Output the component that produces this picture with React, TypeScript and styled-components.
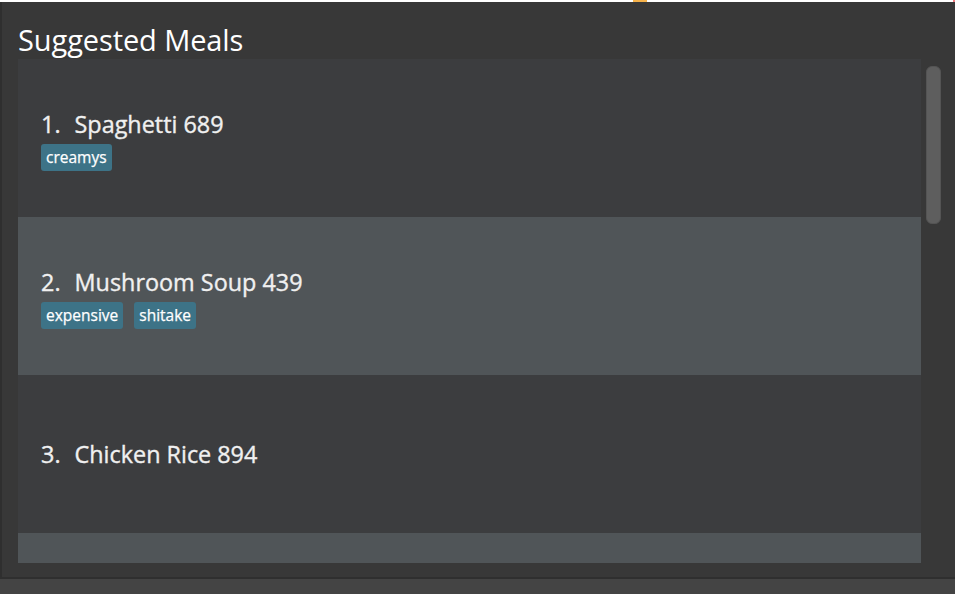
import React, { FC } from "react";
import styled, { createGlobalStyle } from "styled-components";

const GlobalStyle = createGlobalStyle`
  html, body {
    margin: 0;
    padding: 0;
    background: #383838;
    overflow: hidden;
  }
  body {
    font-family: "Open Sans", "Noto Sans", sans-serif;
  }
`;

const Window = styled.div`
  width: 955px;
  height: 594px;
  display: flex;
  flex-direction: column;
  background: #383838;
`;

const TopStrip = styled.div`
  height: 2px;
  display: flex;
  background: #ffffff;
`;

const StripMark = styled.span<{ $left: number; $width: number; $color: string }>`
  margin-left: ${(p) => p.$left}px;
  width: ${(p) => p.$width}px;
  background: ${(p) => p.$color};
`;

const Body = styled.div`
  flex: 1;
  display: flex;
  min-height: 0;
`;

const LeftEdge = styled.div`
  width: 2px;
  background: #2f2f2f;
`;

const Content = styled.section`
  flex: 1;
  display: flex;
  flex-direction: column;
  padding-left: 16px;
`;

const Title = styled.h1`
  margin: 0;
  height: 57px;
  box-sizing: border-box;
  padding-top: 18px;
  font-size: 29px;
  line-height: 40px;
  font-weight: normal;
  color: #ffffff;
  letter-spacing: -0.1px;
`;

const ListArea = styled.div`
  display: flex;
  height: 504px;
`;

const Panel = styled.ul`
  margin: 0;
  padding: 0;
  list-style: none;
  width: 903px;
  overflow: hidden;
  display: flex;
  flex-direction: column;
`;

const Row = styled.li<{ $odd: boolean; $tagged: boolean }>`
  flex: 0 0 158px;
  box-sizing: border-box;
  padding: ${(p) => (p.$tagged ? "3px" : "0")} 23px 0 23px;
  display: flex;
  flex-direction: column;
  justify-content: center;
  gap: 5px;
  background: ${(p) => (p.$odd ? "#3c3d3f" : "#505558")};
`;

const Heading = styled.div`
  display: flex;
  align-items: baseline;
  color: #f0f0f0;
  font-size: 23.4px;
  line-height: 30px;
  -webkit-text-stroke: 0.35px #f0f0f0;
`;

const Index = styled.span`
  margin-right: 14px;
`;

const Name = styled.span`
  margin-right: 6px;
`;

const Calories = styled.span``;

const Tags = styled.div`
  display: flex;
  gap: 11px;
`;

const Tag = styled.span`
  background: #3d7387;
  color: #ffffff;
  font-size: 15.5px;
  line-height: 27px;
  height: 27px;
  padding: 0 5px;
  border-radius: 3px;
  -webkit-text-stroke: 0.25px #ffffff;
`;

const ScrollTrack = styled.div`
  flex: 1;
  padding: 7px 0 0 5px;
`;

const Thumb = styled.div`
  width: 15px;
  height: 158px;
  box-sizing: border-box;
  background: #5e5e5e;
  border: 1px solid #545454;
  border-radius: 6px;
`;

const BottomGap = styled.div`
  height: 14px;
`;

const BottomLine = styled.div`
  height: 2px;
  background: #2f2f2f;
`;

const StatusBar = styled.div`
  height: 15px;
  background: #444444;
`;

type Meal = { name: string; calories: number; tags: string[] };

const meals: Meal[] = [
  { name: "Spaghetti", calories: 689, tags: ["creamys"] },
  { name: "Mushroom Soup", calories: 439, tags: ["expensive", "shitake"] },
  { name: "Chicken Rice", calories: 894, tags: [] },
  { name: "", calories: 0, tags: [] },
];

const App: FC = () => (
  <>
    <GlobalStyle />
    <Window>
      <TopStrip>
        <StripMark $left={633} $width={14} $color="#f6b24a" />
        <StripMark $left={306} $width={2} $color="#f07c80" />
      </TopStrip>
      <Body>
        <LeftEdge />
        <Content>
          <Title>Suggested Meals</Title>
          <ListArea>
            <Panel>
              {meals.map((meal, i) => (
                <Row key={i} $odd={i % 2 === 0} $tagged={meal.tags.length > 0}>
                  {meal.name && (
                    <Heading>
                      <Index>{i + 1}.</Index>
                      <Name>{meal.name}</Name>
                      <Calories>{meal.calories}</Calories>
                    </Heading>
                  )}
                  {meal.tags.length > 0 && (
                    <Tags>
                      {meal.tags.map((t) => (
                        <Tag key={t}>{t}</Tag>
                      ))}
                    </Tags>
                  )}
                </Row>
              ))}
            </Panel>
            <ScrollTrack>
              <Thumb />
            </ScrollTrack>
          </ListArea>
          <BottomGap />
        </Content>
      </Body>
      <BottomLine />
      <StatusBar />
    </Window>
  </>
);

export default App;
